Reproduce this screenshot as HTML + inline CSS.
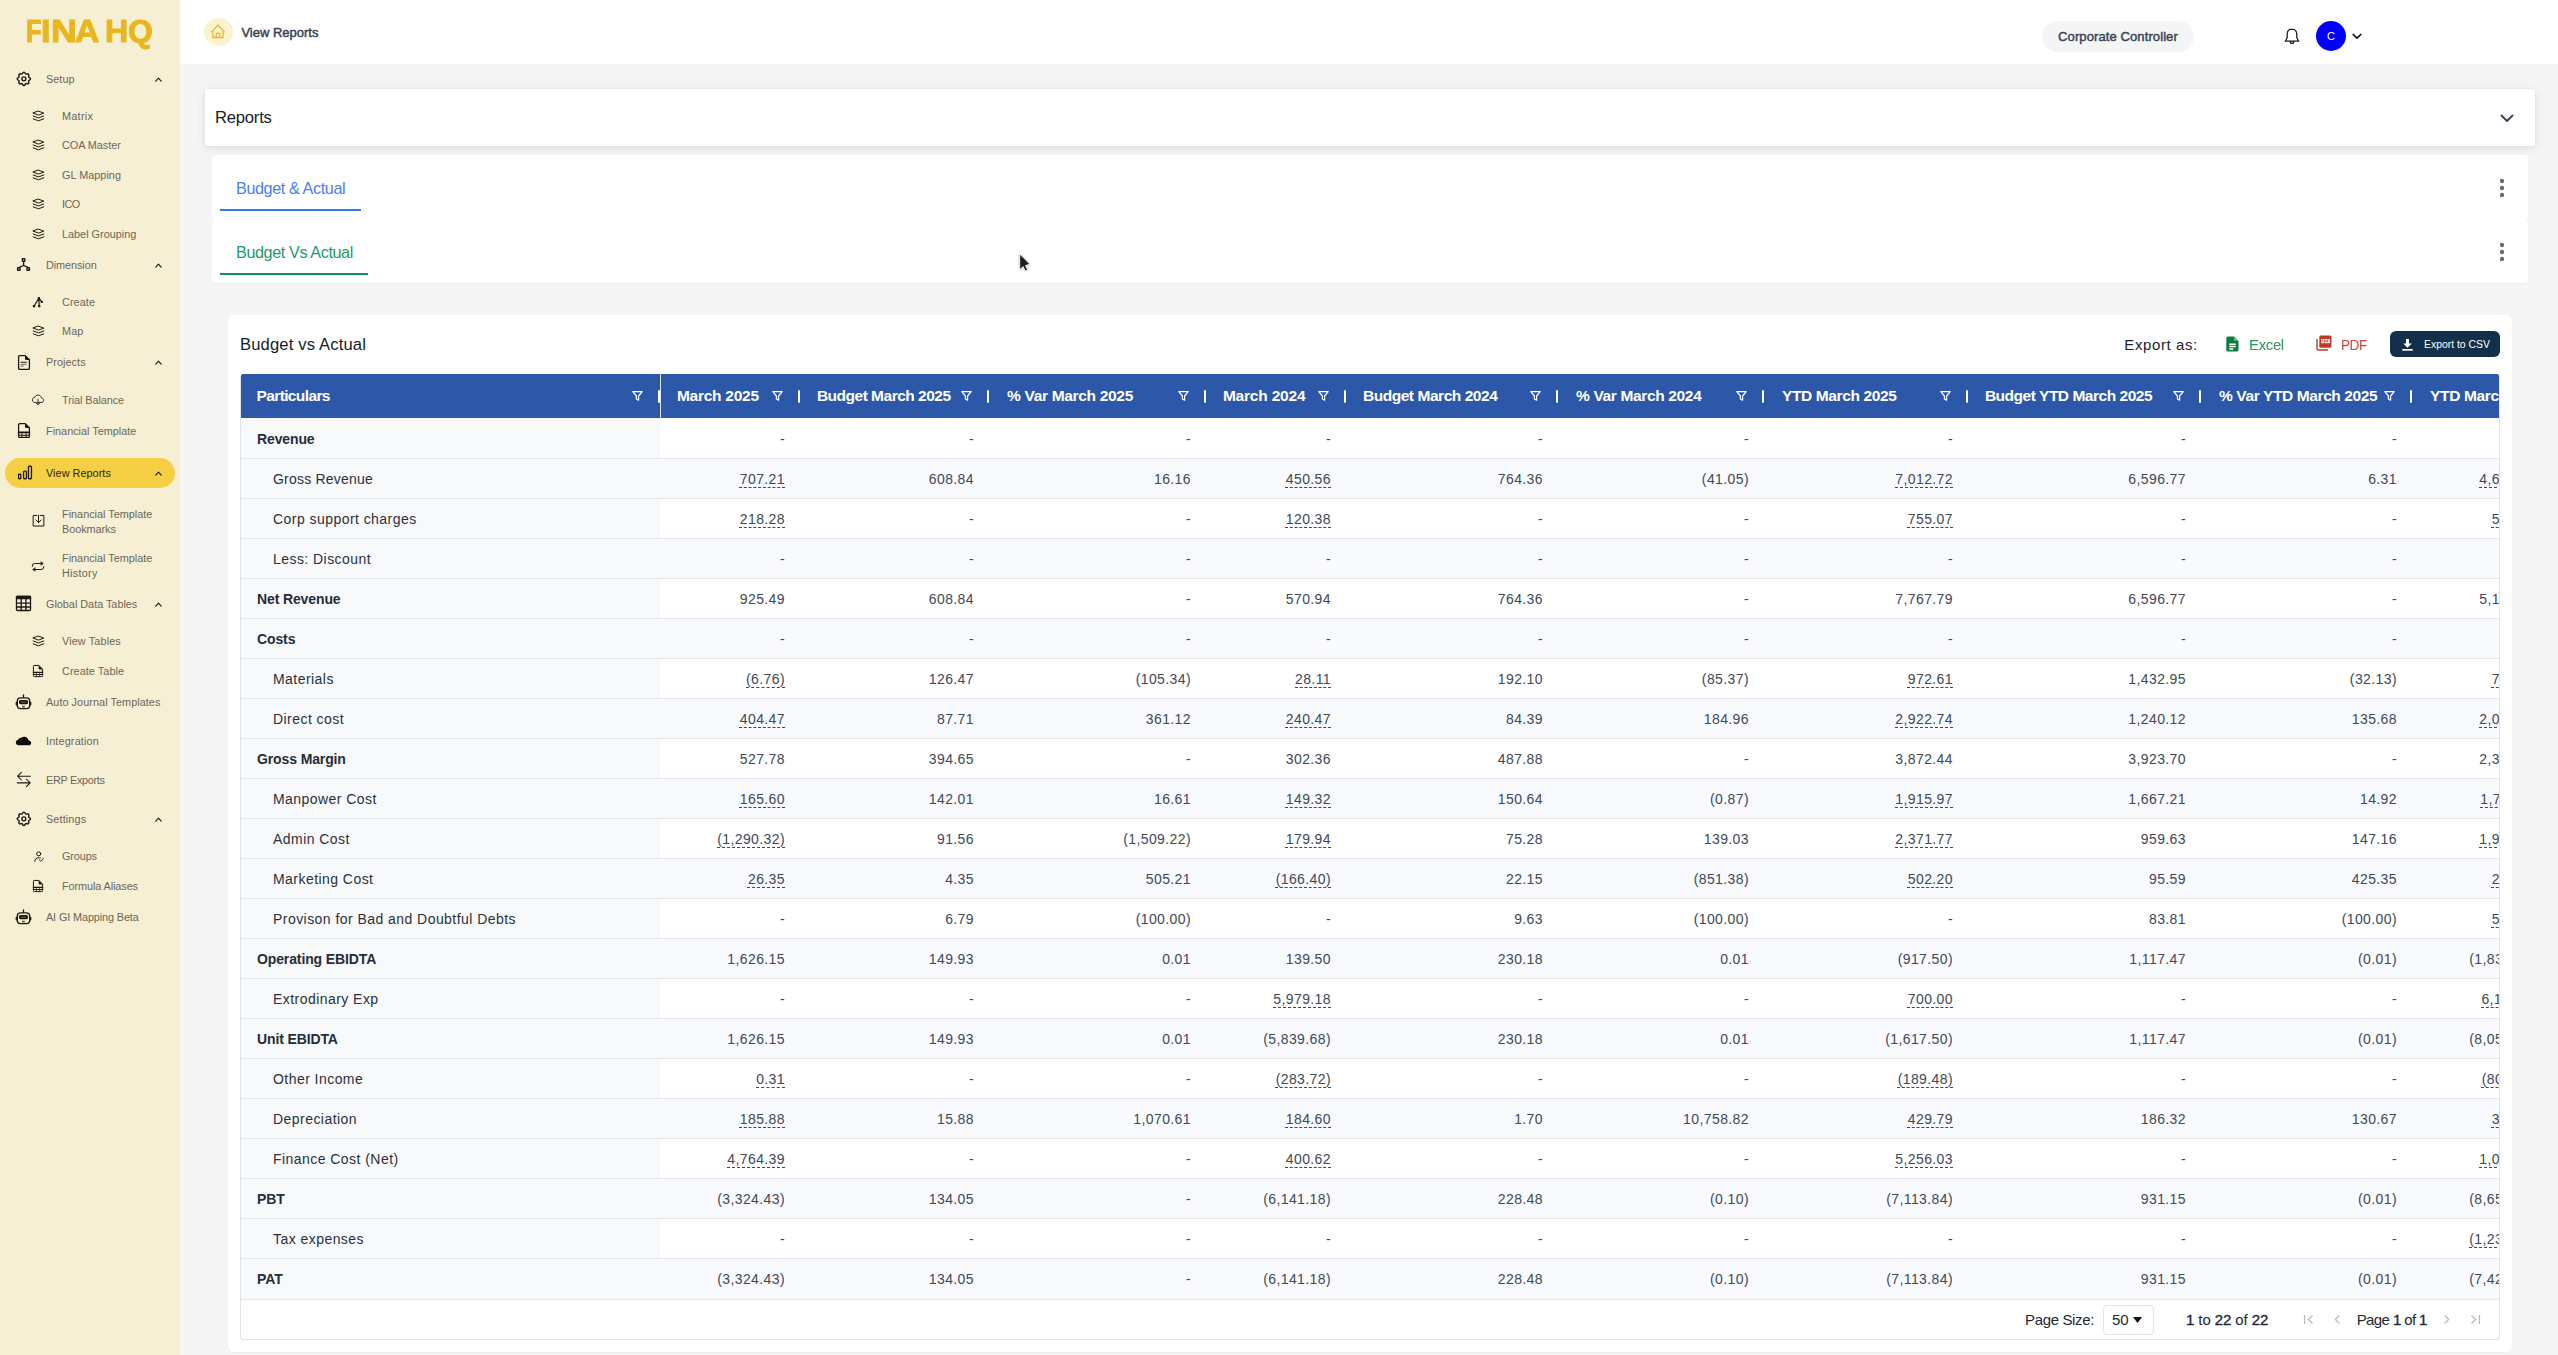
<!DOCTYPE html>
<html lang="en">
<head>
<meta charset="utf-8">
<title>FINA HQ - View Reports</title>
<style>
*{box-sizing:border-box}
html,body{margin:0;padding:0}
body{width:2558px;height:1355px;position:relative;overflow:hidden;background:#f5f5f5;font-family:"Liberation Sans",sans-serif;color:#1f2733}
.abs{position:absolute}
/* sidebar */
#sb{position:absolute;left:0;top:0;width:180px;height:1355px;background:#f7efd4}
#logo{position:absolute;left:0;top:11.500px;height:38px;font-size:32px;font-weight:700;color:#e9b71d;line-height:38px;-webkit-text-stroke:1px #e9b71d;white-space:nowrap}
#logo span{position:absolute;top:0;transform-origin:0 0;display:block}
.ic{position:absolute;line-height:0}
.st{position:absolute;font-size:10.850px;line-height:15px;color:#6b6657;white-space:nowrap}
.st.act{color:#2a2618}
.chev{position:absolute;left:154.600px;line-height:0}
.pill{position:absolute;left:5px;top:458px;width:170px;height:30px;border-radius:15px;background:#f5cf44}
/* topbar */
#top{position:absolute;left:180px;top:0;width:2378px;height:64px;background:#fff}
#home{position:absolute;left:24.200px;top:17.800px;width:28.600px;height:28.600px;border-radius:50%;background:#fdf2cf;display:flex;align-items:center;justify-content:center}
#crumb{position:absolute;left:61.400px;top:24.700px;font-size:13px;font-weight:400;color:#364152;-webkit-text-stroke:.450px #364152;line-height:16px;white-space:nowrap}
#role{position:absolute;left:1862px;top:21px;width:152px;height:31px;border-radius:16px;background:#f4f5f7;font-size:13px;font-weight:400;-webkit-text-stroke:.450px #3b4453;letter-spacing:.100px;color:#3b4453;text-align:center;line-height:32.500px;white-space:nowrap}
#bell{position:absolute;left:2103.500px;top:28px;line-height:0}
#ava{position:absolute;left:2136px;top:21px;width:30px;height:30px;border-radius:50%;background:#0000ff;color:#fff;font-size:11px;text-align:center;line-height:30px}
#avc{position:absolute;left:2172px;top:32.500px;line-height:0}
/* cards */
.card{position:absolute;background:#fff}
#c1{left:205px;top:89px;width:2330px;height:57px;border-radius:3px;box-shadow:0 2px 8px rgba(60,72,100,.13),0 0 2px rgba(60,72,100,.08)}
#c1 .t{position:absolute;left:10px;top:19px;font-size:16.600px;line-height:20px;color:#171c26;letter-spacing:-.200px}
#c2{left:212px;top:155px;width:2316px;height:64px;border-radius:4px;box-shadow:0 1px 0 rgba(0,0,0,.012)}
#c3{left:212px;top:219px;width:2316px;height:64px;border-radius:4px;box-shadow:0 1px 1px rgba(0,0,0,.035)}
.tab{position:absolute;left:24px;font-size:16.200px;line-height:20px;white-space:nowrap;letter-spacing:-.400px}
.ul{position:absolute;left:8px;height:2px}
.kebab{position:absolute;left:2286.700px;width:6px;line-height:0}
#c4{left:228px;top:315px;width:2284px;height:1037px;border-radius:6px;box-shadow:0 1px 2px rgba(60,72,100,.05)}
#c4 .t{position:absolute;left:12px;top:20px;font-size:16.600px;line-height:20px;color:#171c26;letter-spacing:.150px;white-space:nowrap}
#exp{position:absolute;left:1896.300px;top:20px;font-size:15px;line-height:20px;color:#1d2330;letter-spacing:.600px;white-space:nowrap}
#xl{position:absolute;left:2021px;top:19.500px;font-size:15.500px;line-height:20px;color:#2e9460;white-space:nowrap;letter-spacing:-.400px;transform:scaleX(.970);transform-origin:0 0}
#pdf{position:absolute;left:2113px;top:19.500px;font-size:15.500px;line-height:20px;color:#c8473b;white-space:nowrap;letter-spacing:-.600px;transform:scaleX(.880);transform-origin:0 0}
#csv{position:absolute;left:2162px;top:16px;width:110px;height:26px;border-radius:6px;background:#12304a;color:#fff;font-size:10.400px;line-height:27.600px;white-space:nowrap}
#csv span{position:absolute;left:34px;top:0}
/* grid */
#grid{position:absolute;left:240px;top:374px;width:2260px;height:966px;border:1px solid #dfe3ea;border-top:none;border-radius:3px;overflow:hidden;background:#fff}
#hd{position:absolute;left:0;top:0;width:2400px;height:44px;background:#2d57a9}
.hc{position:absolute;top:0;height:44px}
.ht{position:absolute;left:16.900px;top:12px;font-size:15.500px;font-weight:700;color:#fff;line-height:20px;white-space:nowrap}
.flt{position:absolute;right:17.500px;top:17px}
.rs{position:absolute;right:0;top:16px;width:2px;height:13px;background:#fff;border-radius:1px}
.r{position:absolute;left:0;width:2400px;height:40px;border-bottom:1px solid #e3e6ec;background:#fff}
.r.alt{background:#f9fafd}
.pc{position:absolute;left:0;top:0;width:419px;height:39px;background:#f8f9fb;padding-left:32px;font-size:14px;line-height:40px;color:#2a313d;white-space:nowrap;letter-spacing:.450px}
.pc.b{padding-left:16px;font-weight:700;color:#252d3a;letter-spacing:-.120px}
.c{position:absolute;top:0;height:39px;padding-right:15px;text-align:right;font-size:14px;line-height:40px;color:#414856;white-space:nowrap;letter-spacing:.400px}
.c u{text-decoration:underline dashed;text-decoration-thickness:1px;text-underline-offset:3px}
#pin{position:absolute;left:419px;top:0;width:1px;height:44px;background:#dfe6f3}
#pg{position:absolute;left:0;top:925px;width:2260px;height:41px;border-top:1px solid #e3e6ec;font-size:15px;color:#1f2733;line-height:39.400px;white-space:nowrap}
#pg span{position:absolute;top:0}
#pg b{font-weight:400;-webkit-text-stroke:.350px #1f2733}
#pg .i{position:absolute;top:14px;line-height:0}
#sel{position:absolute;left:1862px;top:4.500px;width:51px;height:30.500px;border:1px solid #dfe3ea;border-radius:4px;background:#fff}
</style>
</head>
<body>
<div id="sb">
<div id="logo"><span style="left:25.63px;transform:scaleX(0.792)">F</span><span style="left:41.29px;transform:scaleX(1.07)">I</span><span style="left:50.72px;transform:scaleX(1.116)">N</span><span style="left:75.08px;transform:scaleX(1.053)">A</span><span style="left:99px;transform:scaleX(1)"> </span><span style="left:104.99px;transform:scaleX(1.005)">H</span><span style="left:128.0px;transform:scaleX(0.996)">Q</span></div>
<div class="ic" style="left:14.70px;top:69.65px"><svg width="17.700" height="17.700" viewBox="0 0 24 24" fill="none" stroke="#1b1912" stroke-width="1.900" stroke-linecap="round" stroke-linejoin="round"><path d="M10.325 4.317c.426 -1.756 2.924 -1.756 3.35 0a1.724 1.724 0 0 0 2.573 1.066c1.543 -.94 3.31 .826 2.37 2.37a1.724 1.724 0 0 0 1.065 2.572c1.756 .426 1.756 2.924 0 3.35a1.724 1.724 0 0 0 -1.066 2.573c.94 1.543 -.826 3.31 -2.37 2.37a1.724 1.724 0 0 0 -2.572 1.065c-.426 1.756 -2.924 1.756 -3.35 0a1.724 1.724 0 0 0 -2.573 -1.066c-1.543 .94 -3.31 -.826 -2.37 -2.37a1.724 1.724 0 0 0 -1.065 -2.572c-1.756 -.426 -1.756 -2.924 0 -3.35a1.724 1.724 0 0 0 1.066 -2.573c-.94 -1.543 .826 -3.31 2.37 -2.37c1 .608 2.296 .07 2.572 -1.065z"/><circle cx="12" cy="12" r="2.700"/></svg></div>
<div class="st" style="left:46px;top:71.5px;letter-spacing:0.04px">Setup</div>
<div class="chev" style="top:76.7px"><svg width="7" height="5" viewBox="0 0 7 5" fill="none" stroke="#1b1912" stroke-width="1.150" stroke-linecap="round" stroke-linejoin="round"><path d="M.800 4.100l2.700 -2.900l2.700 2.900"/></svg></div>
<div class="ic" style="left:31.50px;top:109.85px"><svg width="13" height="12" viewBox="0 0 13 12" fill="none" stroke="#1b1912" stroke-width="1.0" stroke-linecap="round" stroke-linejoin="round"><path d="M6.500 1.150L11.800 3.130L6.500 5.100L1.200 3.130Z"/><path d="M1.200 5.970L6.500 7.950L11.800 5.970"/><path d="M1.200 8.820L6.500 10.800L11.800 8.820"/></svg></div>
<div class="st" style="left:62px;top:108.5px;letter-spacing:0.27px">Matrix</div>
<div class="ic" style="left:31.50px;top:138.85px"><svg width="13" height="12" viewBox="0 0 13 12" fill="none" stroke="#1b1912" stroke-width="1.0" stroke-linecap="round" stroke-linejoin="round"><path d="M6.500 1.150L11.800 3.130L6.500 5.100L1.200 3.130Z"/><path d="M1.200 5.970L6.500 7.950L11.800 5.970"/><path d="M1.200 8.820L6.500 10.800L11.800 8.820"/></svg></div>
<div class="st" style="left:62px;top:137.5px;letter-spacing:-0.03px">COA Master</div>
<div class="ic" style="left:31.50px;top:168.85px"><svg width="13" height="12" viewBox="0 0 13 12" fill="none" stroke="#1b1912" stroke-width="1.0" stroke-linecap="round" stroke-linejoin="round"><path d="M6.500 1.150L11.800 3.130L6.500 5.100L1.200 3.130Z"/><path d="M1.200 5.970L6.500 7.950L11.800 5.970"/><path d="M1.200 8.820L6.500 10.800L11.800 8.820"/></svg></div>
<div class="st" style="left:62px;top:167.5px;letter-spacing:0.03px">GL Mapping</div>
<div class="ic" style="left:31.50px;top:197.85px"><svg width="13" height="12" viewBox="0 0 13 12" fill="none" stroke="#1b1912" stroke-width="1.0" stroke-linecap="round" stroke-linejoin="round"><path d="M6.500 1.150L11.800 3.130L6.500 5.100L1.200 3.130Z"/><path d="M1.200 5.970L6.500 7.950L11.800 5.970"/><path d="M1.200 8.820L6.500 10.800L11.800 8.820"/></svg></div>
<div class="st" style="left:62px;top:196.5px;letter-spacing:-0.5px">ICO</div>
<div class="ic" style="left:31.50px;top:227.85px"><svg width="13" height="12" viewBox="0 0 13 12" fill="none" stroke="#1b1912" stroke-width="1.0" stroke-linecap="round" stroke-linejoin="round"><path d="M6.500 1.150L11.800 3.130L6.500 5.100L1.200 3.130Z"/><path d="M1.200 5.970L6.500 7.950L11.800 5.970"/><path d="M1.200 8.820L6.500 10.800L11.800 8.820"/></svg></div>
<div class="st" style="left:62px;top:226.5px;letter-spacing:0.01px">Label Grouping</div>
<div class="ic" style="left:16.10px;top:256.90px"><svg width="15" height="15" viewBox="0 0 15 15" fill="none" stroke="#1b1912" stroke-width="1.35" stroke-linecap="round" stroke-linejoin="round"><rect x="6.350" y="1.750" width="2.500" height="2.500" rx=".300"/><rect x="1.550" y="10.750" width="2.500" height="2.500" rx=".300"/><rect x="10.950" y="10.750" width="2.500" height="2.500" rx=".300"/><path d="M7.600 4.900V8.500M7.600 8.500L3.700 10.200M7.600 8.500L11.500 10.200"/></svg></div>
<div class="st" style="left:46px;top:257.5px;letter-spacing:-0.07px">Dimension</div>
<div class="chev" style="top:262.7px"><svg width="7" height="5" viewBox="0 0 7 5" fill="none" stroke="#1b1912" stroke-width="1.150" stroke-linecap="round" stroke-linejoin="round"><path d="M.800 4.100l2.700 -2.900l2.700 2.900"/></svg></div>
<div class="ic" style="left:32.00px;top:296.10px"><svg width="12" height="12" viewBox="0 0 12 12" fill="none" stroke="#1b1912" stroke-width="1.2" stroke-linecap="round" stroke-linejoin="round"><path d="M6.900 2.100L2 10.200M6.900 2.100L7.200 10.200M6.900 2.100L9.800 5.900"/><rect x="5.800" y="1" width="2.200" height="2.200" rx=".500" fill="#1b1912" stroke="none"/><rect x=".900" y="9.100" width="2.300" height="2.200" rx=".500" fill="#1b1912" stroke="none"/><rect x="6.100" y="9.100" width="2.300" height="2.200" rx=".500" fill="#1b1912" stroke="none"/><rect x="8.700" y="4.800" width="2.200" height="2.200" rx=".500" fill="#1b1912" stroke="none"/></svg></div>
<div class="st" style="left:62px;top:294.5px;letter-spacing:0.09px">Create</div>
<div class="ic" style="left:31.50px;top:324.85px"><svg width="13" height="12" viewBox="0 0 13 12" fill="none" stroke="#1b1912" stroke-width="1.0" stroke-linecap="round" stroke-linejoin="round"><path d="M6.500 1.150L11.800 3.130L6.500 5.100L1.200 3.130Z"/><path d="M1.200 5.970L6.500 7.950L11.800 5.970"/><path d="M1.200 8.820L6.500 10.800L11.800 8.820"/></svg></div>
<div class="st" style="left:62px;top:323.5px;letter-spacing:0.1px">Map</div>
<div class="ic" style="left:16.95px;top:353.95px"><svg width="14" height="17" viewBox="0 0 14 17" fill="none" stroke="#1b1912" stroke-width="1.3" stroke-linecap="round" stroke-linejoin="round"><path d="M2.600 1.600H8.200L12.400 5.800V14.400a1 1 0 0 1 -1 1H2.600a1 1 0 0 1 -1 -1V2.600a1 1 0 0 1 1 -1z"/><path d="M8 1.300L12.700 6H9a1 1 0 0 1 -1 -1z" fill="#1b1912" stroke="none"/><path d="M4.100 8.250H9.300" stroke-width="1.200"/><path d="M4.100 10.350H9.300" stroke-width="1" opacity=".600"/><path d="M4.100 12.050H6.200" stroke-width="1" opacity=".700"/></svg></div>
<div class="st" style="left:46px;top:354.5px;letter-spacing:0.06px">Projects</div>
<div class="chev" style="top:359.7px"><svg width="7" height="5" viewBox="0 0 7 5" fill="none" stroke="#1b1912" stroke-width="1.150" stroke-linecap="round" stroke-linejoin="round"><path d="M.800 4.100l2.700 -2.900l2.700 2.900"/></svg></div>
<div class="ic" style="left:31.00px;top:393.60px"><svg width="14" height="12" viewBox="0 0 14 12" fill="none" stroke="#2e2c24" stroke-width="0.95" stroke-linecap="round" stroke-linejoin="round"><path d="M4.200 8.550C2.600 8.550 1.350 7.400 1.350 5.900C1.350 4.500 2.400 3.400 3.800 3.250C4.300 1.950 5.550 1.050 7 1.050C8.750 1.050 10.200 2.300 10.500 3.950C11.750 4.100 12.650 5.100 12.650 6.300C12.650 7.550 11.650 8.550 10.400 8.550Z"/><path d="M7 5.300V10.600M5.100 8.900L7 10.800L8.900 8.900"/></svg></div>
<div class="st" style="left:62px;top:392.5px;letter-spacing:-0.07px">Trial Balance</div>
<div class="ic" style="left:16.95px;top:422.15px"><svg width="14" height="17" viewBox="0 0 14 17" fill="none" stroke="#1b1912" stroke-width="1.3" stroke-linecap="round" stroke-linejoin="round"><path d="M2.600 1.600H8.200L12.400 5.800V14.400a1 1 0 0 1 -1 1H2.600a1 1 0 0 1 -1 -1V2.600a1 1 0 0 1 1 -1z"/><path d="M8 1.300L12.700 6H9a1 1 0 0 1 -1 -1z" fill="#1b1912" stroke="none"/><path d="M1.600 10.400H12.400" stroke-width="1.700"/><path d="M1.600 13.250H12.400" stroke-width="1.200"/><path d="M4.900 10.400V15.400M9.100 10.400V15.400" stroke-width=".900"/></svg></div>
<div class="st" style="left:46px;top:423.5px;letter-spacing:0.01px">Financial Template</div>
<div class="pill"></div>
<div class="ic" style="left:16.80px;top:465.40px"><svg width="16" height="15" viewBox="0 0 16 15" fill="none" stroke="#1b1912" stroke-width="1.3" stroke-linecap="round" stroke-linejoin="round"><rect x="1.550" y="9.250" width="2.300" height="4.500" rx=".800"/><rect x="6.550" y="6.150" width="2.900" height="7.600" rx=".900"/><rect x="11.450" y="1.250" width="3" height="12.500" rx=".900"/></svg></div>
<div class="st act" style="left:46px;top:465.5px;letter-spacing:0.05px">View Reports</div>
<div class="chev" style="top:470.7px"><svg width="7" height="5" viewBox="0 0 7 5" fill="none" stroke="#1b1912" stroke-width="1.150" stroke-linecap="round" stroke-linejoin="round"><path d="M.800 4.100l2.700 -2.900l2.700 2.900"/></svg></div>
<div class="ic" style="left:31.55px;top:514.35px"><svg width="13" height="13" viewBox="0 0 13 13" fill="none" stroke="#1b1912" stroke-width="1.0" stroke-linecap="round" stroke-linejoin="round"><path d="M4.800 1.450H1.150V12.050H11.850V1.450H8.200"/><path d="M6.500 1.200V8.400M3.900 6L6.500 8.600L9.100 6"/></svg></div>
<div class="st two" style="left:62px;top:506.5px"><span style="letter-spacing:0.01px">Financial Template</span><br><span style="letter-spacing:-0.05px">Bookmarks</span></div>
<div class="ic" style="left:31.10px;top:560.50px"><svg width="14" height="11" viewBox="0 0 14 11" fill="none" stroke="#1b1912" stroke-width="1.0" stroke-linecap="round" stroke-linejoin="round"><path d="M1.300 5.400V5a2.500 2.500 0 0 1 2.500 -2.500H10.800"/><path d="M10.100 .800L12.400 2.500L10.100 4.200z" fill="#1b1912" stroke-width=".500"/><path d="M12.700 5.600V6a2.500 2.500 0 0 1 -2.500 2.500H3.200"/><path d="M3.900 6.800L1.600 8.500L3.900 10.200z" fill="#1b1912" stroke-width=".500"/></svg></div>
<div class="st two" style="left:62px;top:550.5px"><span style="letter-spacing:0.01px">Financial Template</span><br><span style="letter-spacing:0.26px">History</span></div>
<div class="ic" style="left:15.05px;top:595.10px"><svg width="17" height="17" viewBox="0 0 17 17" fill="none" stroke="#1b1912" stroke-width="1.3" stroke-linecap="round" stroke-linejoin="round"><rect x="1.500" y="1.500" width="14" height="14" rx="1"/><rect x=".850" y=".850" width="15.300" height="3.400" rx=".800" fill="#1b1912" stroke="none"/><path d="M6.200 4V15.500M10.900 4V15.500M1.500 8.100H15.500M1.500 12H15.500" stroke-width="1.350"/></svg></div>
<div class="st" style="left:46px;top:596.5px;letter-spacing:-0.01px">Global Data Tables</div>
<div class="chev" style="top:601.7px"><svg width="7" height="5" viewBox="0 0 7 5" fill="none" stroke="#1b1912" stroke-width="1.150" stroke-linecap="round" stroke-linejoin="round"><path d="M.800 4.100l2.700 -2.900l2.700 2.900"/></svg></div>
<div class="ic" style="left:31.50px;top:634.85px"><svg width="13" height="12" viewBox="0 0 13 12" fill="none" stroke="#1b1912" stroke-width="1.0" stroke-linecap="round" stroke-linejoin="round"><path d="M6.500 1.150L11.800 3.130L6.500 5.100L1.200 3.130Z"/><path d="M1.200 5.970L6.500 7.950L11.800 5.970"/><path d="M1.200 8.820L6.500 10.800L11.800 8.820"/></svg></div>
<div class="st" style="left:62px;top:633.5px;letter-spacing:0.13px">View Tables</div>
<div class="ic" style="left:32.10px;top:664.05px"><svg width="12" height="14" viewBox="0 0 12 14" fill="none" stroke="#1b1912" stroke-width="1.0" stroke-linecap="round" stroke-linejoin="round"><path d="M2.300 1.450H6.800L10.600 5.100V11.700a.900 .900 0 0 1 -.900 .900H2.300a.900 .900 0 0 1 -.900 -.900V2.350a.900 .900 0 0 1 .900 -.900z"/><path d="M6.600 1.200L10.900 5.400H7.500a.900 .900 0 0 1 -.900 -.900z" fill="#1b1912" stroke="none"/><path d="M1.400 8.300H10.600" stroke-width="1.300"/><path d="M1.400 10.500H10.600" stroke-width="1.100"/><path d="M4.300 8.300V12.500M7.700 8.300V12.500" stroke-width=".700"/></svg></div>
<div class="st" style="left:62px;top:663.5px;letter-spacing:0.07px">Create Table</div>
<div class="ic" style="left:14.95px;top:694.10px"><svg width="17" height="16" viewBox="0 0 17 16" fill="none" stroke="#1b1912" stroke-width="1.4" stroke-linecap="round" stroke-linejoin="round"><rect x="2.300" y="3.900" width="12.400" height="10.700" rx="3.300"/><path d="M8.500 1.200V3.600" stroke-width="1.200"/><circle cx="8.500" cy="1.100" r=".650" fill="#1b1912" stroke="none"/><path d="M1.300 8.300V10.800M15.700 8.300V10.800" stroke-width="1.300"/><rect x="3.900" y="6.100" width="9.200" height="4.100" rx="1.700" fill="#1b1912" stroke="none"/><path d="M6.300 8.150H10.700" stroke="#8f8870" stroke-width=".700"/><path d="M7.200 12.600H9.800" stroke="#4d4a3e" stroke-width="1.700" stroke-linecap="butt"/></svg></div>
<div class="st" style="left:46px;top:694.5px;letter-spacing:0.06px">Auto Journal Templates</div>
<div class="ic" style="left:15.05px;top:735.95px"><svg width="17" height="10" viewBox="0 0 17 10"><path d="M3.700 9.250C2 9.250 .850 8 .850 6.500C.850 5.100 1.800 4 3.200 3.800C3.600 2.400 4.900 1.600 6.300 1.750C7 1.100 8.100 .750 9.200 .750C11.400 .750 13.100 2.200 13.400 4.200C15 4.400 16.150 5.500 16.150 6.900C16.150 8.200 15 9.250 13.600 9.250Z" fill="#0d0d0d"/></svg></div>
<div class="st" style="left:46px;top:733.5px;letter-spacing:0.15px">Integration</div>
<div class="ic" style="left:15.75px;top:771.15px"><svg width="16" height="17" viewBox="0 0 16 17" fill="none" stroke="#1b1912" stroke-width="1.05" stroke-linecap="round" stroke-linejoin="round"><path d="M14.300 5.150H1.800M5.400 1.300L1.550 5.150L5.400 9"/><path d="M1.300 11.850H14.200M10.400 8L14.250 11.850L10.400 15.700"/></svg></div>
<div class="st" style="left:46px;top:772.5px;letter-spacing:-0.29px">ERP Exports</div>
<div class="ic" style="left:14.70px;top:809.65px"><svg width="17.700" height="17.700" viewBox="0 0 24 24" fill="none" stroke="#1b1912" stroke-width="1.900" stroke-linecap="round" stroke-linejoin="round"><path d="M10.325 4.317c.426 -1.756 2.924 -1.756 3.35 0a1.724 1.724 0 0 0 2.573 1.066c1.543 -.94 3.31 .826 2.37 2.37a1.724 1.724 0 0 0 1.065 2.572c1.756 .426 1.756 2.924 0 3.35a1.724 1.724 0 0 0 -1.066 2.573c.94 1.543 -.826 3.31 -2.37 2.37a1.724 1.724 0 0 0 -2.572 1.065c-.426 1.756 -2.924 1.756 -3.35 0a1.724 1.724 0 0 0 -2.573 -1.066c-1.543 .94 -3.31 -.826 -2.37 -2.37a1.724 1.724 0 0 0 -1.065 -2.572c-1.756 -.426 -1.756 -2.924 0 -3.35a1.724 1.724 0 0 0 1.066 -2.573c-.94 -1.543 .826 -3.31 2.37 -2.37c1 .608 2.296 .07 2.572 -1.065z"/><circle cx="12" cy="12" r="2.700"/></svg></div>
<div class="st" style="left:46px;top:811.5px;letter-spacing:0.13px">Settings</div>
<div class="chev" style="top:816.7px"><svg width="7" height="5" viewBox="0 0 7 5" fill="none" stroke="#1b1912" stroke-width="1.150" stroke-linecap="round" stroke-linejoin="round"><path d="M.800 4.100l2.700 -2.900l2.700 2.900"/></svg></div>
<div class="ic" style="left:32.60px;top:849.65px"><svg width="12" height="13" viewBox="0 0 12 13" fill="none" stroke="#1b1912" stroke-width="1.0" stroke-linecap="round" stroke-linejoin="round"><circle cx="5.700" cy="3.850" r="2"/><path d="M1.700 11.350C1.900 8.900 3.500 7.750 5.700 7.750C6.300 7.750 6.900 7.800 7.400 7.950"/><path d="M6.400 9.850L8 11.350L10.400 8.350" stroke-width=".850"/></svg></div>
<div class="st" style="left:62px;top:848.5px;letter-spacing:-0.12px">Groups</div>
<div class="ic" style="left:32.10px;top:879.05px"><svg width="12" height="14" viewBox="0 0 12 14" fill="none" stroke="#1b1912" stroke-width="1.0" stroke-linecap="round" stroke-linejoin="round"><path d="M2.300 1.450H6.800L10.600 5.100V11.700a.900 .900 0 0 1 -.900 .900H2.300a.900 .900 0 0 1 -.900 -.900V2.350a.900 .900 0 0 1 .900 -.900z"/><path d="M6.600 1.200L10.900 5.400H7.500a.900 .900 0 0 1 -.900 -.900z" fill="#1b1912" stroke="none"/><path d="M1.400 8.300H10.600" stroke-width="1.300"/><path d="M1.400 10.500H10.600" stroke-width="1.100"/><path d="M4.300 8.300V12.500M7.700 8.300V12.500" stroke-width=".700"/></svg></div>
<div class="st" style="left:62px;top:878.5px;letter-spacing:-0.08px">Formula Aliases</div>
<div class="ic" style="left:14.95px;top:909.10px"><svg width="17" height="16" viewBox="0 0 17 16" fill="none" stroke="#1b1912" stroke-width="1.4" stroke-linecap="round" stroke-linejoin="round"><rect x="2.300" y="3.900" width="12.400" height="10.700" rx="3.300"/><path d="M8.500 1.200V3.600" stroke-width="1.200"/><circle cx="8.500" cy="1.100" r=".650" fill="#1b1912" stroke="none"/><path d="M1.300 8.300V10.800M15.700 8.300V10.800" stroke-width="1.300"/><rect x="3.900" y="6.100" width="9.200" height="4.100" rx="1.700" fill="#1b1912" stroke="none"/><path d="M6.300 8.150H10.700" stroke="#8f8870" stroke-width=".700"/><path d="M7.200 12.600H9.800" stroke="#4d4a3e" stroke-width="1.700" stroke-linecap="butt"/></svg></div>
<div class="st" style="left:46px;top:909.5px;letter-spacing:-0.11px">AI GI Mapping Beta</div>
</div>

<div id="top">
  <div id="home"><svg style="margin-top:-.600px" width="16" height="15" viewBox="0 0 16 15" fill="none" stroke="#e9b923" stroke-width="1.300" stroke-linejoin="miter" stroke-linecap="butt"><path d="M1.300 8.100L8 1.300L14.700 8.100"/><path d="M2.900 7V13.500H13.100V7"/><path d="M6.300 13.500V9.300H9.700V13.500"/></svg></div>
  <div id="crumb">View Reports</div>
  <div id="role">Corporate Controller</div>
  <div id="bell"><svg width="16" height="18" viewBox="0 0 16 18" fill="none" stroke="#1c1c1c" stroke-width="1.300" stroke-linecap="round" stroke-linejoin="round"><path d="M8 1.200c-3 0 -4.800 2.200 -4.800 5v3.600l-1.900 3.400h13.400l-1.900 -3.400v-3.600c0 -2.800 -1.800 -5 -4.800 -5z"/><path d="M6.300 13.400c0 2.600 3.400 2.600 3.400 0"/></svg></div>
  <div id="ava">C</div>
  <div id="avc"><svg width="10" height="7" viewBox="0 0 10 7" fill="none" stroke="#111" stroke-width="1.700" stroke-linecap="round" stroke-linejoin="round"><path d="M1.200 1.500l3.800 3.600l3.800 -3.600"/></svg></div>
</div>

<div class="card" id="c1"><div class="t">Reports</div>
  <div class="abs" style="left:2295px;top:24.700px;line-height:0"><svg width="14" height="9" viewBox="0 0 14 9" fill="none" stroke="#3a4558" stroke-width="2" stroke-linecap="round" stroke-linejoin="round"><path d="M1.500 1.500l5.500 5.500l5.500 -5.500"/></svg></div>
</div>
<div class="card" id="c2"><div class="tab" style="top:23px;color:#4a7ff0">Budget &amp; Actual</div><div class="ul" style="top:54px;width:141px;background:#3578f0"></div>
  <div class="kebab" style="top:23px"><svg width="6" height="20" viewBox="0 0 6 20" fill="#6d6d6d"><circle cx="3" cy="3" r="2.200"/><circle cx="3" cy="10" r="2.200"/><circle cx="3" cy="17" r="2.200"/></svg></div>
</div>
<div class="card" id="c3"><div class="tab" style="top:23px;color:#1d9a6c">Budget Vs Actual</div><div class="ul" style="top:54px;width:148px;background:#14905f"></div>
  <div class="kebab" style="top:23px"><svg width="6" height="20" viewBox="0 0 6 20" fill="#6d6d6d"><circle cx="3" cy="3" r="2.200"/><circle cx="3" cy="10" r="2.200"/><circle cx="3" cy="17" r="2.200"/></svg></div>
</div>

<div class="card" id="c4">
  <div class="t">Budget vs Actual</div>
  <div id="exp">Export as:</div>
  <div class="abs" style="left:1997.800px;top:21px;line-height:0"><svg width="13" height="16" viewBox="0 0 13 16"><path d="M1.800 .5h6.200l4.500 4.500v9a1.500 1.500 0 0 1 -1.500 1.500h-9.200a1.500 1.500 0 0 1 -1.500 -1.500v-12a1.500 1.500 0 0 1 1.500 -1.500z" fill="#0f7d42"/><path d="M3.300 8.300h6.400M3.300 10.600h6.400M3.300 12.900h4" stroke="#fff" stroke-width="1.500"/><path d="M7.900 .6v4.300h4.400z" fill="#5fb384"/></svg></div>
  <div id="xl">Excel</div>
  <div class="abs" style="left:2088px;top:20px;line-height:0"><svg width="16" height="16" viewBox="0 0 16 16"><path d="M1 4v9.500a1.500 1.500 0 0 0 1.500 1.500h9.500" fill="none" stroke="#c0392b" stroke-width="1.400"/><rect x="3.300" y=".5" width="12.200" height="12.200" rx="1.500" fill="#c0392b"/><rect x="5" y="4" width="8.800" height="4.200" fill="#fff" opacity=".9"/><path d="M6 5v2.300M6 5h.9M8.300 5v2.300c1.500 0 1.500 -2.300 0 -2.300M11 7.300v-2.300h1.300M11 6.200h1" stroke="#c0392b" stroke-width=".8" fill="none"/></svg></div>
  <div id="pdf">PDF</div>
  <div id="csv"><svg class="abs" style="left:11.500px;top:7.500px" width="11" height="12" viewBox="0 0 11 12" fill="#fff"><path d="M4 0h3v4.500h2.800l-4.300 4.300l-4.300 -4.300h2.800z"/><rect x=".3" y="10" width="10.400" height="1.700"/></svg><span>Export to CSV</span></div>
</div>

<div id="grid">
  <div id="hd">
<div class="hc" style="left:0;width:419px"><span class="ht" style="left:15.500px;letter-spacing:-0.62px">Particulars</span><svg class="flt" width="11" height="10" viewBox="0 0 11 10" fill="none" stroke="#fff" stroke-width="1.200" stroke-linejoin="round"><path d="M.8 .7h9.400l-3.600 4.300v4.200l-2.200 -1.300v-2.900z"/></svg><i class="rs"></i></div>
<div class="hc" style="left:419px;width:140px"><span class="ht" style="letter-spacing:-0.256px">March 2025</span><svg class="flt" width="11" height="10" viewBox="0 0 11 10" fill="none" stroke="#fff" stroke-width="1.200" stroke-linejoin="round"><path d="M.8 .7h9.400l-3.600 4.300v4.200l-2.200 -1.300v-2.900z"/></svg><i class="rs"></i></div>
<div class="hc" style="left:559px;width:189px"><span class="ht" style="letter-spacing:-0.494px">Budget March 2025</span><svg class="flt" width="11" height="10" viewBox="0 0 11 10" fill="none" stroke="#fff" stroke-width="1.200" stroke-linejoin="round"><path d="M.8 .7h9.400l-3.600 4.300v4.200l-2.200 -1.300v-2.900z"/></svg><i class="rs"></i></div>
<div class="hc" style="left:748px;width:217px"><span class="ht" style="letter-spacing:-0.313px;left:18px">% Var March 2025</span><svg class="flt" width="11" height="10" viewBox="0 0 11 10" fill="none" stroke="#fff" stroke-width="1.200" stroke-linejoin="round"><path d="M.8 .7h9.400l-3.600 4.300v4.200l-2.200 -1.300v-2.900z"/></svg><i class="rs"></i></div>
<div class="hc" style="left:965px;width:140px"><span class="ht" style="letter-spacing:-0.2px">March 2024</span><svg class="flt" width="11" height="10" viewBox="0 0 11 10" fill="none" stroke="#fff" stroke-width="1.200" stroke-linejoin="round"><path d="M.8 .7h9.400l-3.600 4.300v4.200l-2.200 -1.300v-2.900z"/></svg><i class="rs"></i></div>
<div class="hc" style="left:1105px;width:212px"><span class="ht" style="letter-spacing:-0.45px">Budget March 2024</span><svg class="flt" width="11" height="10" viewBox="0 0 11 10" fill="none" stroke="#fff" stroke-width="1.200" stroke-linejoin="round"><path d="M.8 .7h9.400l-3.600 4.300v4.200l-2.200 -1.300v-2.900z"/></svg><i class="rs"></i></div>
<div class="hc" style="left:1317px;width:206px"><span class="ht" style="letter-spacing:-0.347px;left:18px">% Var March 2024</span><svg class="flt" width="11" height="10" viewBox="0 0 11 10" fill="none" stroke="#fff" stroke-width="1.200" stroke-linejoin="round"><path d="M.8 .7h9.400l-3.600 4.300v4.200l-2.200 -1.300v-2.900z"/></svg><i class="rs"></i></div>
<div class="hc" style="left:1523px;width:204px"><span class="ht" style="letter-spacing:-0.377px;left:18px">YTD March 2025</span><svg class="flt" width="11" height="10" viewBox="0 0 11 10" fill="none" stroke="#fff" stroke-width="1.200" stroke-linejoin="round"><path d="M.8 .7h9.400l-3.600 4.300v4.200l-2.200 -1.300v-2.900z"/></svg><i class="rs"></i></div>
<div class="hc" style="left:1727px;width:233px"><span class="ht" style="letter-spacing:-0.47px">Budget YTD March 2025</span><svg class="flt" width="11" height="10" viewBox="0 0 11 10" fill="none" stroke="#fff" stroke-width="1.200" stroke-linejoin="round"><path d="M.8 .7h9.400l-3.600 4.300v4.200l-2.200 -1.300v-2.900z"/></svg><i class="rs"></i></div>
<div class="hc" style="left:1960px;width:211px"><span class="ht" style="letter-spacing:-0.384px;left:18px">% Var YTD March 2025</span><svg class="flt" width="11" height="10" viewBox="0 0 11 10" fill="none" stroke="#fff" stroke-width="1.200" stroke-linejoin="round"><path d="M.8 .7h9.400l-3.600 4.300v4.200l-2.200 -1.300v-2.900z"/></svg><i class="rs"></i></div>
<div class="hc" style="left:2171px;width:140px"><span class="ht" style="letter-spacing:-0.338px;left:18px">YTD March 2024</span><svg class="flt" width="11" height="10" viewBox="0 0 11 10" fill="none" stroke="#fff" stroke-width="1.200" stroke-linejoin="round"><path d="M.8 .7h9.400l-3.600 4.300v4.200l-2.200 -1.300v-2.900z"/></svg><i class="rs"></i></div>
  </div>
<div class="r" style="top:45px"><div class="pc b">Revenue</div><div class="c" style="left:419px;width:140px">-</div><div class="c" style="left:559px;width:189px">-</div><div class="c" style="left:748px;width:217px">-</div><div class="c" style="left:965px;width:140px">-</div><div class="c" style="left:1105px;width:212px">-</div><div class="c" style="left:1317px;width:206px">-</div><div class="c" style="left:1523px;width:204px">-</div><div class="c" style="left:1727px;width:233px">-</div><div class="c" style="left:1960px;width:211px">-</div><div class="c" style="left:2171px;width:140px">-</div></div>
<div class="r alt" style="top:85px"><div class="pc" style="letter-spacing:.2px">Gross Revenue</div><div class="c" style="left:419px;width:140px"><u>707.21</u></div><div class="c" style="left:559px;width:189px">608.84</div><div class="c" style="left:748px;width:217px">16.16</div><div class="c" style="left:965px;width:140px"><u>450.56</u></div><div class="c" style="left:1105px;width:212px">764.36</div><div class="c" style="left:1317px;width:206px">(41.05)</div><div class="c" style="left:1523px;width:204px"><u>7,012.72</u></div><div class="c" style="left:1727px;width:233px">6,596.77</div><div class="c" style="left:1960px;width:211px">6.31</div><div class="c" style="left:2171px;width:140px"><u>4,612.48</u></div></div>
<div class="r" style="top:125px"><div class="pc">Corp support charges</div><div class="c" style="left:419px;width:140px"><u>218.28</u></div><div class="c" style="left:559px;width:189px">-</div><div class="c" style="left:748px;width:217px">-</div><div class="c" style="left:965px;width:140px"><u>120.38</u></div><div class="c" style="left:1105px;width:212px">-</div><div class="c" style="left:1317px;width:206px">-</div><div class="c" style="left:1523px;width:204px"><u>755.07</u></div><div class="c" style="left:1727px;width:233px">-</div><div class="c" style="left:1960px;width:211px">-</div><div class="c" style="left:2171px;width:140px"><u>512.36</u></div></div>
<div class="r alt" style="top:165px"><div class="pc">Less: Discount</div><div class="c" style="left:419px;width:140px">-</div><div class="c" style="left:559px;width:189px">-</div><div class="c" style="left:748px;width:217px">-</div><div class="c" style="left:965px;width:140px">-</div><div class="c" style="left:1105px;width:212px">-</div><div class="c" style="left:1317px;width:206px">-</div><div class="c" style="left:1523px;width:204px">-</div><div class="c" style="left:1727px;width:233px">-</div><div class="c" style="left:1960px;width:211px">-</div><div class="c" style="left:2171px;width:140px">-</div></div>
<div class="r" style="top:205px"><div class="pc b">Net Revenue</div><div class="c" style="left:419px;width:140px">925.49</div><div class="c" style="left:559px;width:189px">608.84</div><div class="c" style="left:748px;width:217px">-</div><div class="c" style="left:965px;width:140px">570.94</div><div class="c" style="left:1105px;width:212px">764.36</div><div class="c" style="left:1317px;width:206px">-</div><div class="c" style="left:1523px;width:204px">7,767.79</div><div class="c" style="left:1727px;width:233px">6,596.77</div><div class="c" style="left:1960px;width:211px">-</div><div class="c" style="left:2171px;width:140px">5,124.84</div></div>
<div class="r alt" style="top:245px"><div class="pc b">Costs</div><div class="c" style="left:419px;width:140px">-</div><div class="c" style="left:559px;width:189px">-</div><div class="c" style="left:748px;width:217px">-</div><div class="c" style="left:965px;width:140px">-</div><div class="c" style="left:1105px;width:212px">-</div><div class="c" style="left:1317px;width:206px">-</div><div class="c" style="left:1523px;width:204px">-</div><div class="c" style="left:1727px;width:233px">-</div><div class="c" style="left:1960px;width:211px">-</div><div class="c" style="left:2171px;width:140px">-</div></div>
<div class="r" style="top:285px"><div class="pc">Materials</div><div class="c" style="left:419px;width:140px"><u>(6.76)</u></div><div class="c" style="left:559px;width:189px">126.47</div><div class="c" style="left:748px;width:217px">(105.34)</div><div class="c" style="left:965px;width:140px"><u>28.11</u></div><div class="c" style="left:1105px;width:212px">192.10</div><div class="c" style="left:1317px;width:206px">(85.37)</div><div class="c" style="left:1523px;width:204px"><u>972.61</u></div><div class="c" style="left:1727px;width:233px">1,432.95</div><div class="c" style="left:1960px;width:211px">(32.13)</div><div class="c" style="left:2171px;width:140px"><u>742.15</u></div></div>
<div class="r alt" style="top:325px"><div class="pc">Direct cost</div><div class="c" style="left:419px;width:140px"><u>404.47</u></div><div class="c" style="left:559px;width:189px">87.71</div><div class="c" style="left:748px;width:217px">361.12</div><div class="c" style="left:965px;width:140px"><u>240.47</u></div><div class="c" style="left:1105px;width:212px">84.39</div><div class="c" style="left:1317px;width:206px">184.96</div><div class="c" style="left:1523px;width:204px"><u>2,922.74</u></div><div class="c" style="left:1727px;width:233px">1,240.12</div><div class="c" style="left:1960px;width:211px">135.68</div><div class="c" style="left:2171px;width:140px"><u>2,045.33</u></div></div>
<div class="r" style="top:365px"><div class="pc b">Gross Margin</div><div class="c" style="left:419px;width:140px">527.78</div><div class="c" style="left:559px;width:189px">394.65</div><div class="c" style="left:748px;width:217px">-</div><div class="c" style="left:965px;width:140px">302.36</div><div class="c" style="left:1105px;width:212px">487.88</div><div class="c" style="left:1317px;width:206px">-</div><div class="c" style="left:1523px;width:204px">3,872.44</div><div class="c" style="left:1727px;width:233px">3,923.70</div><div class="c" style="left:1960px;width:211px">-</div><div class="c" style="left:2171px;width:140px">2,337.36</div></div>
<div class="r alt" style="top:405px"><div class="pc">Manpower Cost</div><div class="c" style="left:419px;width:140px"><u>165.60</u></div><div class="c" style="left:559px;width:189px">142.01</div><div class="c" style="left:748px;width:217px">16.61</div><div class="c" style="left:965px;width:140px"><u>149.32</u></div><div class="c" style="left:1105px;width:212px">150.64</div><div class="c" style="left:1317px;width:206px">(0.87)</div><div class="c" style="left:1523px;width:204px"><u>1,915.97</u></div><div class="c" style="left:1727px;width:233px">1,667.21</div><div class="c" style="left:1960px;width:211px">14.92</div><div class="c" style="left:2171px;width:140px"><u>1,711.12</u></div></div>
<div class="r" style="top:445px"><div class="pc">Admin Cost</div><div class="c" style="left:419px;width:140px"><u>(1,290.32)</u></div><div class="c" style="left:559px;width:189px">91.56</div><div class="c" style="left:748px;width:217px">(1,509.22)</div><div class="c" style="left:965px;width:140px"><u>179.94</u></div><div class="c" style="left:1105px;width:212px">75.28</div><div class="c" style="left:1317px;width:206px">139.03</div><div class="c" style="left:1523px;width:204px"><u>2,371.77</u></div><div class="c" style="left:1727px;width:233px">959.63</div><div class="c" style="left:1960px;width:211px">147.16</div><div class="c" style="left:2171px;width:140px"><u>1,912.45</u></div></div>
<div class="r alt" style="top:485px"><div class="pc">Marketing Cost</div><div class="c" style="left:419px;width:140px"><u>26.35</u></div><div class="c" style="left:559px;width:189px">4.35</div><div class="c" style="left:748px;width:217px">505.21</div><div class="c" style="left:965px;width:140px"><u>(166.40)</u></div><div class="c" style="left:1105px;width:212px">22.15</div><div class="c" style="left:1317px;width:206px">(851.38)</div><div class="c" style="left:1523px;width:204px"><u>502.20</u></div><div class="c" style="left:1727px;width:233px">95.59</div><div class="c" style="left:1960px;width:211px">425.35</div><div class="c" style="left:2171px;width:140px"><u>214.60</u></div></div>
<div class="r" style="top:525px"><div class="pc">Provison for Bad and Doubtful Debts</div><div class="c" style="left:419px;width:140px">-</div><div class="c" style="left:559px;width:189px">6.79</div><div class="c" style="left:748px;width:217px">(100.00)</div><div class="c" style="left:965px;width:140px">-</div><div class="c" style="left:1105px;width:212px">9.63</div><div class="c" style="left:1317px;width:206px">(100.00)</div><div class="c" style="left:1523px;width:204px">-</div><div class="c" style="left:1727px;width:233px">83.81</div><div class="c" style="left:1960px;width:211px">(100.00)</div><div class="c" style="left:2171px;width:140px"><u>523.10</u></div></div>
<div class="r alt" style="top:565px"><div class="pc b">Operating EBIDTA</div><div class="c" style="left:419px;width:140px">1,626.15</div><div class="c" style="left:559px;width:189px">149.93</div><div class="c" style="left:748px;width:217px">0.01</div><div class="c" style="left:965px;width:140px">139.50</div><div class="c" style="left:1105px;width:212px">230.18</div><div class="c" style="left:1317px;width:206px">0.01</div><div class="c" style="left:1523px;width:204px">(917.50)</div><div class="c" style="left:1727px;width:233px">1,117.47</div><div class="c" style="left:1960px;width:211px">(0.01)</div><div class="c" style="left:2171px;width:140px">(1,832.40)</div></div>
<div class="r" style="top:605px"><div class="pc">Extrodinary Exp</div><div class="c" style="left:419px;width:140px">-</div><div class="c" style="left:559px;width:189px">-</div><div class="c" style="left:748px;width:217px">-</div><div class="c" style="left:965px;width:140px"><u>5,979.18</u></div><div class="c" style="left:1105px;width:212px">-</div><div class="c" style="left:1317px;width:206px">-</div><div class="c" style="left:1523px;width:204px"><u>700.00</u></div><div class="c" style="left:1727px;width:233px">-</div><div class="c" style="left:1960px;width:211px">-</div><div class="c" style="left:2171px;width:140px"><u>6,111.10</u></div></div>
<div class="r alt" style="top:645px"><div class="pc b">Unit EBIDTA</div><div class="c" style="left:419px;width:140px">1,626.15</div><div class="c" style="left:559px;width:189px">149.93</div><div class="c" style="left:748px;width:217px">0.01</div><div class="c" style="left:965px;width:140px">(5,839.68)</div><div class="c" style="left:1105px;width:212px">230.18</div><div class="c" style="left:1317px;width:206px">0.01</div><div class="c" style="left:1523px;width:204px">(1,617.50)</div><div class="c" style="left:1727px;width:233px">1,117.47</div><div class="c" style="left:1960px;width:211px">(0.01)</div><div class="c" style="left:2171px;width:140px">(8,054.62)</div></div>
<div class="r" style="top:685px"><div class="pc">Other Income</div><div class="c" style="left:419px;width:140px"><u>0.31</u></div><div class="c" style="left:559px;width:189px">-</div><div class="c" style="left:748px;width:217px">-</div><div class="c" style="left:965px;width:140px"><u>(283.72)</u></div><div class="c" style="left:1105px;width:212px">-</div><div class="c" style="left:1317px;width:206px">-</div><div class="c" style="left:1523px;width:204px"><u>(189.48)</u></div><div class="c" style="left:1727px;width:233px">-</div><div class="c" style="left:1960px;width:211px">-</div><div class="c" style="left:2171px;width:140px"><u>(803.25)</u></div></div>
<div class="r alt" style="top:725px"><div class="pc">Depreciation</div><div class="c" style="left:419px;width:140px"><u>185.88</u></div><div class="c" style="left:559px;width:189px">15.88</div><div class="c" style="left:748px;width:217px">1,070.61</div><div class="c" style="left:965px;width:140px"><u>184.60</u></div><div class="c" style="left:1105px;width:212px">1.70</div><div class="c" style="left:1317px;width:206px">10,758.82</div><div class="c" style="left:1523px;width:204px"><u>429.79</u></div><div class="c" style="left:1727px;width:233px">186.32</div><div class="c" style="left:1960px;width:211px">130.67</div><div class="c" style="left:2171px;width:140px"><u>356.20</u></div></div>
<div class="r" style="top:765px"><div class="pc">Finance Cost (Net)</div><div class="c" style="left:419px;width:140px"><u>4,764.39</u></div><div class="c" style="left:559px;width:189px">-</div><div class="c" style="left:748px;width:217px">-</div><div class="c" style="left:965px;width:140px"><u>400.62</u></div><div class="c" style="left:1105px;width:212px">-</div><div class="c" style="left:1317px;width:206px">-</div><div class="c" style="left:1523px;width:204px"><u>5,256.03</u></div><div class="c" style="left:1727px;width:233px">-</div><div class="c" style="left:1960px;width:211px">-</div><div class="c" style="left:2171px;width:140px"><u>1,024.50</u></div></div>
<div class="r alt" style="top:805px"><div class="pc b">PBT</div><div class="c" style="left:419px;width:140px">(3,324.43)</div><div class="c" style="left:559px;width:189px">134.05</div><div class="c" style="left:748px;width:217px">-</div><div class="c" style="left:965px;width:140px">(6,141.18)</div><div class="c" style="left:1105px;width:212px">228.48</div><div class="c" style="left:1317px;width:206px">(0.10)</div><div class="c" style="left:1523px;width:204px">(7,113.84)</div><div class="c" style="left:1727px;width:233px">931.15</div><div class="c" style="left:1960px;width:211px">(0.01)</div><div class="c" style="left:2171px;width:140px">(8,657.07)</div></div>
<div class="r" style="top:845px"><div class="pc">Tax expenses</div><div class="c" style="left:419px;width:140px">-</div><div class="c" style="left:559px;width:189px">-</div><div class="c" style="left:748px;width:217px">-</div><div class="c" style="left:965px;width:140px">-</div><div class="c" style="left:1105px;width:212px">-</div><div class="c" style="left:1317px;width:206px">-</div><div class="c" style="left:1523px;width:204px">-</div><div class="c" style="left:1727px;width:233px">-</div><div class="c" style="left:1960px;width:211px">-</div><div class="c" style="left:2171px;width:140px"><u>(1,234.95)</u></div></div>
<div class="r alt" style="top:885px;border-bottom:none"><div class="pc b">PAT</div><div class="c" style="left:419px;width:140px">(3,324.43)</div><div class="c" style="left:559px;width:189px">134.05</div><div class="c" style="left:748px;width:217px">-</div><div class="c" style="left:965px;width:140px">(6,141.18)</div><div class="c" style="left:1105px;width:212px">228.48</div><div class="c" style="left:1317px;width:206px">(0.10)</div><div class="c" style="left:1523px;width:204px">(7,113.84)</div><div class="c" style="left:1727px;width:233px">931.15</div><div class="c" style="left:1960px;width:211px">(0.01)</div><div class="c" style="left:2171px;width:140px">(7,422.12)</div></div>
  <div class="abs" style="left:0;top:44px;width:419px;height:1px;background:#f8f9fb"></div>
  <div id="pin"></div>
  <div id="pg">
    <span style="left:1784px;letter-spacing:-.350px">Page Size:</span>
    <div id="sel"><span style="left:8px;top:-5.500px">50</span><svg class="abs" style="left:29px;top:11.500px" width="9" height="6" viewBox="0 0 9 6" fill="#111"><path d="M0 0h9l-4.500 6z"/></svg></div>
    <span style="left:1945px;letter-spacing:-.100px"><b>1</b> to <b>22</b> of <b>22</b></span>
    <div class="i" style="left:2062px"><svg width="11" height="11" viewBox="0 0 11 11" fill="none" stroke="#b6b9c0" stroke-width="1.200"><path d="M1.500 1v9M9.500 1.500l-4.200 4l4.200 4"/></svg></div>
    <div class="i" style="left:2092px"><svg width="8" height="11" viewBox="0 0 8 11" fill="none" stroke="#b6b9c0" stroke-width="1.200"><path d="M6.500 1.500l-4.200 4l4.200 4"/></svg></div>
    <span style="left:2115.700px;letter-spacing:-.600px">Page <b>1</b> of <b>1</b></span>
    <div class="i" style="left:2202px"><svg width="8" height="11" viewBox="0 0 8 11" fill="none" stroke="#b6b9c0" stroke-width="1.200"><path d="M1.500 1.500l4.200 4l-4.200 4"/></svg></div>
    <div class="i" style="left:2229px"><svg width="11" height="11" viewBox="0 0 11 11" fill="none" stroke="#b6b9c0" stroke-width="1.200"><path d="M9.500 1v9M1.500 1.500l4.200 4l-4.200 4"/></svg></div>
  </div>
</div>

<svg class="abs" style="left:1018px;top:253px;filter:drop-shadow(0 .5px .8px rgba(0,0,0,.25))" width="14" height="20" viewBox="0 0 14 20"><path d="M1.700 .900V16.700L5.200 13.700L7.200 18.100L9.700 17L7.500 12.600L12 11.300Z" fill="#1e1e1e" stroke="#fff" stroke-width=".900" stroke-linejoin="round"/></svg>
</body>
</html>
